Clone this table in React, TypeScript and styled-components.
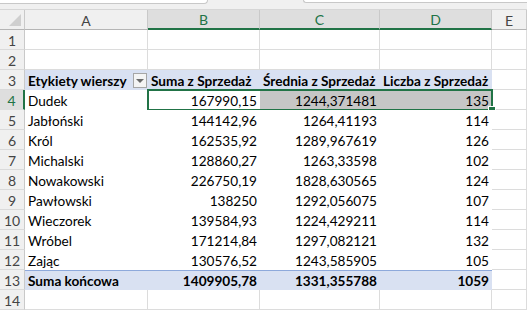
import React from "react";
import styled, { createGlobalStyle, css } from "styled-components";

const Global = createGlobalStyle`
  html, body { margin: 0; padding: 0; background: #ffffff; }
  body { width: 527px; height: 310px; overflow: hidden; font-family: "Lato", "Liberation Sans", sans-serif; }
`;

const GREEN = "#217346";
const GRID = "#dcdcdc";
const HEAD_LINE = "#c9c9c9";
const TEMPLATE = "25px 123px 112px 120px 112px 35px";

const Page = styled.div`
  width: 527px;
  height: 310px;
  display: flex;
  flex-direction: column;
  overflow: hidden;
`;

const FormulaStrip = styled.div`
  height: 10px;
  flex: none;
  background: #f0f0f0;
  display: flex;
  align-items: flex-start;
  gap: 95px;
  border-bottom: 1px solid #d6d6d6;
  box-sizing: border-box;
`;

const NameBox = styled.div`
  width: 207px;
  height: 3px;
  background: #ffffff;
  border: 1px solid #c8c8c8;
  border-top: none;
  border-left: none;
  border-bottom-right-radius: 4px;
`;

const FormulaBox = styled.div`
  flex: 1;
  height: 2px;
  background: #ffffff;
  border-bottom: 1px solid #c8c8c8;
  border-left: 1px solid #c8c8c8;
  border-bottom-left-radius: 4px;
`;

const Sheet = styled.div`
  display: flex;
  flex-direction: column;
  font-size: 13.6px;
  color: #000;
`;

const SheetRow = styled.div`
  position: relative;
  display: grid;
  grid-template-columns: ${TEMPLATE};
  height: 20px;
`;

const Corner = styled.div`
  position: relative;
  background: #f0f0f0;
  border-right: 1px solid ${HEAD_LINE};
  border-bottom: 1px solid #b5b5b5;
  box-sizing: border-box;
`;

const CornerTriangle = styled.div`
  position: absolute;
  right: 3px;
  bottom: 3px;
  width: 0;
  height: 0;
  border-left: 12px solid transparent;
  border-bottom: 12px solid #cfcfcf;
`;

const ColHead = styled.div<{ $sel?: boolean }>`
  box-sizing: border-box;
  display: flex;
  align-items: center;
  justify-content: center;
  padding-top: 1px;
  font-size: 14px;
  background: ${(p) => (p.$sel ? "#dedede" : "#f0f0f0")};
  color: ${(p) => (p.$sel ? GREEN : "#444444")};
  border-right: 1px solid ${HEAD_LINE};
  border-bottom: ${(p) => (p.$sel ? `2px solid ${GREEN}` : "1px solid #b5b5b5")};
`;

const RowHead = styled.div<{ $sel?: boolean }>`
  box-sizing: border-box;
  display: flex;
  align-items: center;
  justify-content: center;
  padding-top: 1px;
  font-size: 14px;
  background: ${(p) => (p.$sel ? "#dedede" : "#f0f0f0")};
  color: ${(p) => (p.$sel ? GREEN : "#444444")};
  border-right: ${(p) => (p.$sel ? `2px solid ${GREEN}` : `1px solid ${HEAD_LINE}`)};
  border-bottom: 1px solid ${(p) => (p.$sel ? "#dedede" : "#dadada")};
`;

type Kind = "plain" | "pivot" | "phead" | "ptotal";

const Cell = styled.div<{ $kind: Kind; $right?: boolean; $fill?: string; $bold?: boolean }>`
  box-sizing: border-box;
  display: flex;
  align-items: center;
  justify-content: ${(p) => (p.$right ? "flex-end" : "flex-start")};
  padding: 1px 3px 0 3px;
  white-space: nowrap;
  font-weight: ${(p) => (p.$bold ? 700 : 400)};
  background: ${(p) => p.$fill || "#ffffff"};
  ${(p) =>
    p.$kind === "plain" &&
    css`
      border-right: 1px solid ${GRID};
      border-bottom: 1px solid ${GRID};
    `}
  ${(p) =>
    p.$kind === "phead" &&
    css`
      background: #d9e1f2;
    `}
  ${(p) =>
    p.$kind === "ptotal" &&
    css`
      background: #d9e1f2;
      border-top: 1px solid #8ea9db;
      padding-top: 0;
    `}
`;

const LabelCell = styled(Cell)`
  justify-content: space-between;
  padding-right: 1px;
`;

const FilterButton = styled.div`
  width: 14px;
  height: 15px;
  box-sizing: border-box;
  border: 1px solid #a6a6a6;
  background: #f4f4f4;
  display: flex;
  align-items: center;
  justify-content: center;
  &::after {
    content: "";
    border-left: 4px solid transparent;
    border-right: 4px solid transparent;
    border-top: 4px solid #6b6b6b;
  }
`;

const Selection = styled.div`
  position: absolute;
  left: 147px;
  top: -1px;
  width: 346px;
  height: 22px;
  box-sizing: border-box;
  border: 2px solid ${GREEN};
  pointer-events: none;
`;

const FillHandle = styled.div`
  position: absolute;
  right: -5px;
  bottom: -5px;
  width: 6px;
  height: 6px;
  background: ${GREEN};
  border: 1px solid #ffffff;
`;

type Row = { name: string; sum: string; avg: string; cnt: string };

const rows: Row[] = [
  { name: "Dudek", sum: "167990,15", avg: "1244,371481", cnt: "135" },
  { name: "Jabłoński", sum: "144142,96", avg: "1264,41193", cnt: "114" },
  { name: "Król", sum: "162535,92", avg: "1289,967619", cnt: "126" },
  { name: "Michalski", sum: "128860,27", avg: "1263,33598", cnt: "102" },
  { name: "Nowakowski", sum: "226750,19", avg: "1828,630565", cnt: "124" },
  { name: "Pawłowski", sum: "138250", avg: "1292,056075", cnt: "107" },
  { name: "Wieczorek", sum: "139584,93", avg: "1224,429211", cnt: "114" },
  { name: "Wróbel", sum: "171214,84", avg: "1297,082121", cnt: "132" },
  { name: "Zając", sum: "130576,52", avg: "1243,585905", cnt: "105" },
];

const cols = ["A", "B", "C", "D", "E"];

export default function App() {
  return (
    <Page>
      <Global />
      <FormulaStrip>
        <NameBox />
        <FormulaBox />
      </FormulaStrip>
      <Sheet>
        <SheetRow>
          <Corner>
            <CornerTriangle />
          </Corner>
          {cols.map((c) => (
            <ColHead key={c} $sel={c === "B" || c === "C" || c === "D"}>
              {c}
            </ColHead>
          ))}
        </SheetRow>

        {[1, 2].map((r) => (
          <SheetRow key={r}>
            <RowHead>{r}</RowHead>
            {cols.map((c) => (
              <Cell key={c} $kind="plain" />
            ))}
          </SheetRow>
        ))}

        <SheetRow>
          <RowHead>3</RowHead>
          <LabelCell $kind="phead" $bold>
            <span>Etykiety wierszy</span>
            <FilterButton />
          </LabelCell>
          <Cell $kind="phead" $bold>Suma z Sprzedaż</Cell>
          <Cell $kind="phead" $bold>Średnia z Sprzedaż</Cell>
          <Cell $kind="phead" $bold>Liczba z Sprzedaż</Cell>
          <Cell $kind="plain" />
        </SheetRow>

        {rows.map((r, i) => (
          <SheetRow key={r.name}>
            <RowHead $sel={i === 0}>{i + 4}</RowHead>
            <Cell $kind="pivot">{r.name}</Cell>
            <Cell $kind="pivot" $right>{r.sum}</Cell>
            <Cell $kind="pivot" $right $fill={i === 0 ? "#c6c6c6" : undefined}>
              {r.avg}
            </Cell>
            <Cell $kind="pivot" $right $fill={i === 0 ? "#c6c6c6" : undefined}>
              {r.cnt}
            </Cell>
            <Cell $kind="plain" />
            {i === 0 && (
              <Selection>
                <FillHandle />
              </Selection>
            )}
          </SheetRow>
        ))}

        <SheetRow>
          <RowHead>13</RowHead>
          <Cell $kind="ptotal" $bold>Suma końcowa</Cell>
          <Cell $kind="ptotal" $bold $right>1409905,78</Cell>
          <Cell $kind="ptotal" $bold $right>1331,355788</Cell>
          <Cell $kind="ptotal" $bold $right>1059</Cell>
          <Cell $kind="plain" />
        </SheetRow>

        <SheetRow>
          <RowHead>14</RowHead>
          {cols.map((c) => (
            <Cell key={c} $kind="plain" />
          ))}
        </SheetRow>
      </Sheet>
    </Page>
  );
}
